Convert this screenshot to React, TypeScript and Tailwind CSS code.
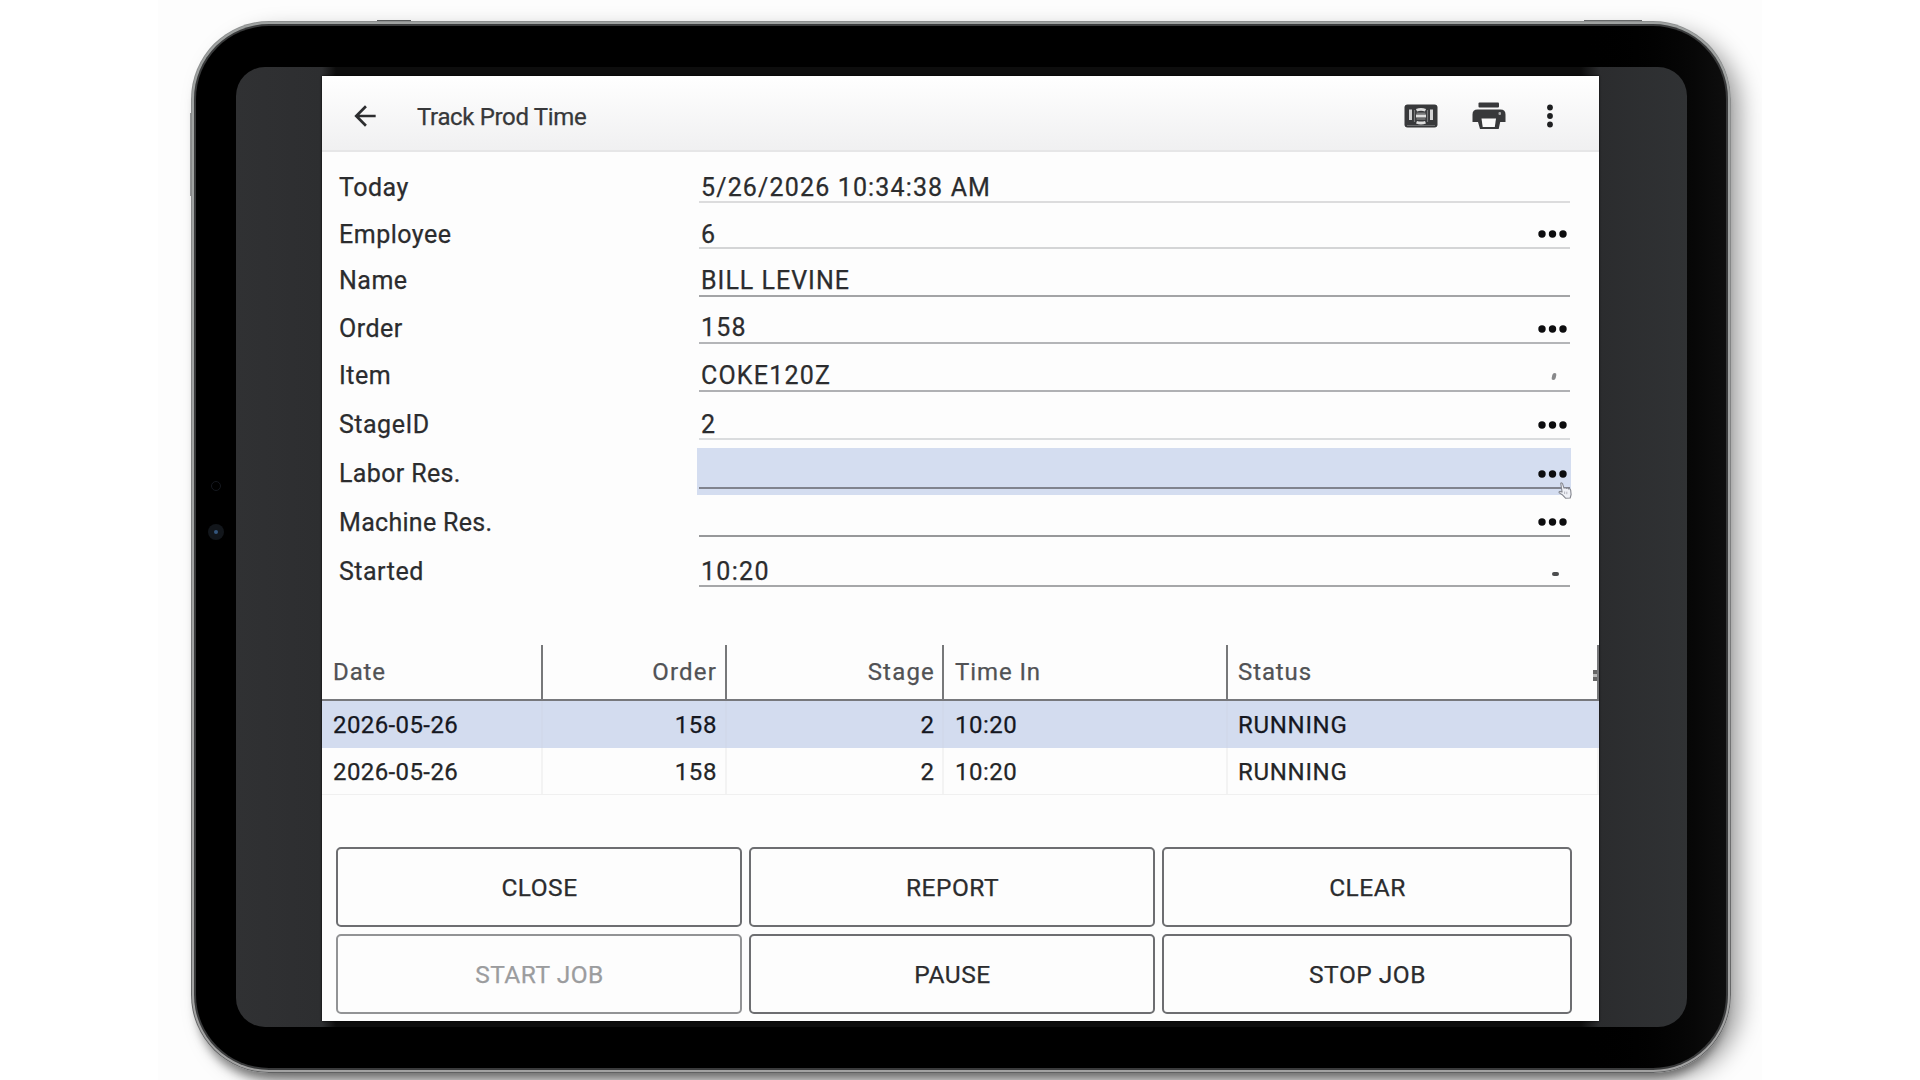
import clsx from "clsx";
import { MdArrowBack } from "react-icons/md";

type Extra = "lookup" | "comma" | "dash";

interface Field {
  label: string;
  value: string;
  row: string;
  line: string;
  labelClass: string;
  valueClass?: string;
  extra?: Extra;
  active?: boolean;
}

const fields: Field[] = [
  { label: "Today", value: "5/26/2026 10:34:38 AM", row: "h-[51px]", line: "border-[#dcdcdd]", labelClass: "tracking-[0.5px]", valueClass: "-mb-[2px] tracking-[1.15px]" },
  { label: "Employee", value: "6", row: "h-[46px]", line: "border-[#d4d5d6]", labelClass: "-mb-[1px] tracking-[0.5px]", valueClass: "-mb-[3px]", extra: "lookup" },
  { label: "Name", value: "BILL LEVINE", row: "h-[48px]", line: "border-[#a3a4a6]", labelClass: "mb-[1px] tracking-[0.5px]", valueClass: "-mb-[1px] tracking-[1px]" },
  { label: "Order", value: "158", row: "h-[47px]", line: "border-[#b4b5b8]", labelClass: "tracking-[0.5px]", valueClass: "-mb-[1px] tracking-[1.2px]", extra: "lookup" },
  { label: "Item", value: "COKE120Z", row: "h-[48px]", line: "border-[#b0b1b4]", labelClass: "mb-[1px] tracking-[0.5px]", valueClass: "-mb-[1px] tracking-[1.2px]", extra: "comma" },
  { label: "StageID", value: "2", row: "h-[48px]", line: "border-[#dadcde]", labelClass: "tracking-[0.5px]", valueClass: "-mb-[2px]", extra: "lookup" },
  { label: "Labor Res.", value: "", row: "h-[50px]", line: "border-[#80838e]", labelClass: "mb-[1px] tracking-[0.35px]", extra: "lookup", active: true },
  { label: "Machine Res.", value: "", row: "h-[47px]", line: "border-[#97989a]", labelClass: "-mb-[1px] tracking-[0.3px]", extra: "lookup" },
  { label: "Started", value: "10:20", row: "h-[50px]", line: "border-[#a6a7a9]", labelClass: "tracking-[0.5px]", valueClass: "-mb-[2px] tracking-[1.3px]", extra: "dash" },
];

const records = [
  { date: "2026-05-26", order: 158, stage: 2, timeIn: "10:20", status: "RUNNING", selected: true },
  { date: "2026-05-26", order: 158, stage: 2, timeIn: "10:20", status: "RUNNING", selected: false },
];

const actions = [
  { label: "CLOSE" },
  { label: "REPORT" },
  { label: "CLEAR" },
  { label: "START JOB", disabled: true },
  { label: "PAUSE" },
  { label: "STOP JOB" },
];

const columns = "grid grid-cols-[221px_184px_217px_284px_1fr]";

const KeypadIcon = () => (
  <svg width="34" height="24" viewBox="0 0 34 24">
    <rect x="0.5" y="0.5" width="33" height="23" rx="3" fill="#38393b" />
    <path d="M3 21.5h28" stroke="#77787a" strokeWidth="0.8" />
    <path d="M6.5 5.5v10.5M27.5 5.5v10.5" stroke="#d2d2d3" strokeWidth="3" />
    <path d="M10.5 6v12M23.5 6v12" stroke="#77787a" strokeWidth="1.2" />
    <path d="M12.5 6.3q4.5-1.8 9 0M12 12h10M12.5 18.2q4.5 1.6 9 0" stroke="#dedede" strokeWidth="2.8" fill="none" />
    <path d="M12.5 9.2h9M12.5 15h9" stroke="#77787a" strokeWidth="1.4" />
  </svg>
);

const PrinterIcon = () => (
  <svg width="34" height="28" viewBox="0 0 34 28">
    <rect x="6.5" y="0.5" width="20.5" height="5" rx="1" fill="#38393b" />
    <path d="M5.5 7.5h23q5 0 5 5V20h-5.3l-1.5 7H8l-2-7H.5v-7.500q0-5 5-5z" fill="#38393b" />
    <path d="M9.5 16.5h14.5l-1.2 8.500H10.7z" fill="#fafafa" />
    <rect x="26.5" y="10" width="2.5" height="3" rx="1" fill="#a9aaab" />
  </svg>
);

const Ellipsis = () => (
  <svg width="30" height="8" viewBox="0 0 30 8" fill="#0d0d0f">
    <circle cx="4" cy="4" r="3.7" />
    <circle cx="14.5" cy="4" r="3.7" />
    <circle cx="25" cy="4" r="3.7" />
  </svg>
);

const HandCursor = () => (
  <svg className="absolute -right-[2px] -bottom-[12px]" width="14" height="18" viewBox="0 0 14 18">
    <path
      d="M2.7 1.2q1.2-.8 1.9.6l1.4 4.4q1.3-1.2 2.3.2 1.5-.9 2.2.5 1.8-.5 2.2 1.4l.4 4.2-.9 3.5-4.7.2-3.3-3.5-3-1.8q-.6-1.4 1-1.5l1.9.6z"
      fill="#eef0f6"
      stroke="#85878f"
      strokeWidth="1.1"
      strokeLinejoin="round"
    />
    <path d="M6.6 9.5v2.5M8.8 9.7v2.5" stroke="#a3a5ad" strokeWidth="0.8" />
  </svg>
);

const FieldRow = ({ field }: { field: Field }) => (
  <div className={clsx("flex items-end", field.row)}>
    <div className={clsx("w-[360px] text-[25px] leading-[30px]", field.labelClass)}>{field.label}</div>
    <div
      className={clsx(
        "relative flex h-full flex-1 items-end border-b-2",
        field.line,
        field.active && "before:absolute before:-right-[1px] before:-bottom-[7px] before:-left-[2px] before:h-[47px] before:bg-[#d4ddf0]"
      )}
    >
      {field.active && <div className={clsx("absolute inset-x-0 -bottom-[1px] border-b-2", field.line)} />}
      <span className={clsx("relative flex-1 pl-[2px] text-[25px] leading-[30px]", field.valueClass)}>{field.value}</span>
      {field.extra === "lookup" && (
        <button className={clsx("relative mr-[2px]", field.active ? "mb-[10px]" : "mb-[9px]")}>
          <Ellipsis />
        </button>
      )}
      {field.extra === "comma" && <span className="mr-[14px] mb-[10px] h-[7px] w-[4px] -skew-x-12 rounded-xs bg-[#88898b]" />}
      {field.extra === "dash" && <span className="mr-[11px] mb-[9px] h-[4px] w-[7px] rounded-xs bg-[#4c4d4f]" />}
      {field.active && <HandCursor />}
    </div>
  </div>
);

const Toolbar = () => (
  <header className="flex h-[76px] items-center border-b-2 border-[#e6e6e7] bg-linear-to-b from-white to-[#f0f0f1] pt-[6px] pr-[45px] pl-[27px]">
    <MdArrowBack className="size-[32px] text-[#2c2d2f]" />
    <h1 className="ml-[36px] flex-1 pt-[1px] text-[24px] leading-[30px] tracking-[-0.35px] text-[#37383a]">
      Track Prod Time
    </h1>
    <KeypadIcon />
    <div className="ml-[34px]">
      <PrinterIcon />
    </div>
    <svg className="ml-[40px]" width="8" height="26" viewBox="0 0 8 26" fill="#1e1f21">
      <circle cx="4" cy="4.5" r="2.9" />
      <circle cx="4" cy="13" r="2.9" />
      <circle cx="4" cy="21.5" r="2.9" />
    </svg>
  </header>
);

const RecordTable = () => (
  <div className="mt-[58px] border-b border-[#f0f0f0] text-[24px] leading-[30px]">
    <div className={clsx(columns, "h-[56px] border-b-2 border-[#77787c] text-[#515255] tracking-[0.9px] [&>div]:pt-[12px]")}>
      <div className="border-r-2 border-[#77787a] pl-[11px]">Date</div>
      <div className="border-r-2 border-[#77787a] pr-[8px] text-right tracking-[1.2px]">Order</div>
      <div className="border-r-2 border-[#77787a] pr-[7px] text-right tracking-[1.2px]">Stage</div>
      <div className="border-r-2 border-[#77787a] pl-[11px]">Time In</div>
      <div className="flex justify-between border-r-2 border-[#77787a] pl-[10px]">
        Status
        <span className="mt-[13px] h-[11px] w-[4px] border-y-4 border-[#666] bg-[#bbb]" />
      </div>
    </div>
    {records.map((record, i) => (
      <div
        key={i}
        className={clsx(
          columns,
          record.selected
            ? "h-[47px] bg-[#d3dcef] text-[#15171f] [&>div]:border-[#d1d9eb]"
            : "h-[46px] text-[#242527] [&>div]:border-[#f3f3f3]",
          "[&>div]:border-r-2 [&>div]:pt-[9px]"
        )}
      >
        <div className="pl-[11px] tracking-[0.4px]">{record.date}</div>
        <div className="pr-[8px] text-right tracking-[0.6px]">{record.order}</div>
        <div className="pr-[8px] text-right">{record.stage}</div>
        <div className="pl-[11px] tracking-[0.5px]">{record.timeIn}</div>
        <div className="pl-[10px] tracking-[0.7px]">{record.status}</div>
      </div>
    ))}
  </div>
);

const ActionGrid = () => (
  <div className="mt-[52px] grid grid-cols-[406px_406px_410px] gap-[7px] pl-[14px]">
    {actions.map((action) => (
      <button
        key={action.label}
        disabled={action.disabled}
        className={clsx(
          "h-[80px] rounded-[5px] border-2 pt-[2px] pl-[1px] text-[24.5px] tracking-[0.5px]",
          action.disabled ? "border-[#929395] text-[#9b9c9e]" : "border-[#6d6e71] text-[#2b2c2e]"
        )}
      >
        {action.label}
      </button>
    ))}
  </div>
);

const CameraBezel = () => (
  <div className="flex w-[40px] flex-col items-center pt-[414px]">
    <div className="size-[10px] rounded-full border border-[#15181f]" />
    <div className="mt-[33px] flex size-[16px] items-center justify-center rounded-full bg-[#12161b]">
      <div className="size-[4px] rounded-full bg-[#35567c]" />
    </div>
  </div>
);

export default function App() {
  return (
    <div className="h-[1080px] w-[1920px] overflow-hidden bg-white font-['Roboto',sans-serif] text-[#2b2c2e] [-webkit-text-stroke:0.25px]">
      <div className="relative mr-[158px] ml-[158px] h-[1080px] overflow-hidden bg-[#fdfdfd] pt-[21px] pl-[33px]">
        <div className="absolute top-[113px] left-[32px] h-[83px] w-[2px] bg-[#9a9c9d]" />
        <div className="absolute top-[20px] left-[219px] h-[3px] w-[34px] bg-[#5d5f60]" />
        <div className="absolute top-[20px] left-[1426px] h-[3px] w-[58px] bg-[#6d6f70]" />
        <div className="relative h-[1052px] w-[1540px] rounded-[78px] bg-linear-to-b from-[#8d8f8f] via-[#7d7e7f] to-[#606162] p-[1px] shadow-[12px_8px_24px_-4px_rgba(0,0,0,0.4),0_12px_10px_-6px_rgba(0,0,0,0.4)]">
          <div className="h-full rounded-[77px] bg-linear-to-b from-[#9fa2a1] to-[#a2a2a2] p-[2px]">
            <div className="h-full rounded-[75px] bg-[#3a3b3c] p-[2px]">
              <div className="flex h-full rounded-[73px] bg-linear-to-r from-black from-90% to-[#0e0e0e] pt-[41px]">
                <CameraBezel />
                <div className="flex h-[960px] w-[1451px] rounded-[29px] bg-[linear-gradient(90deg,#303133_0,#2d2e30_86px,#0d0d0d_100px,#0d0d0d_1345px,#2b2c2e_1363px,#303234_100%)] pt-[9px]">
                  <div className="mr-[1px] w-[85px]" />
                  <main className="h-[945px] w-[1277px] bg-[#fdfdfd] shadow-[0_0_2px_#000]">
                    <Toolbar />
                    <section className="pr-[29px] pl-[17px]">
                      {fields.map((field) => (
                        <FieldRow key={field.label} field={field} />
                      ))}
                    </section>
                    <RecordTable />
                    <ActionGrid />
                  </main>
                </div>
              </div>
            </div>
          </div>
        </div>
      </div>
    </div>
  );
}
